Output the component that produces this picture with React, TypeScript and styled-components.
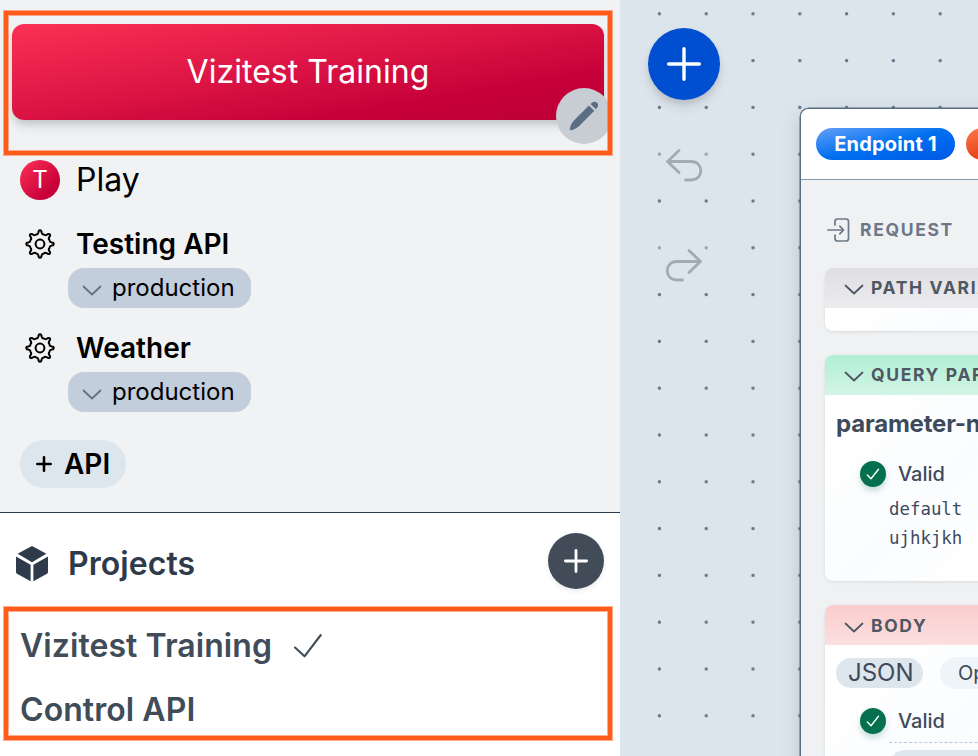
import React from 'react';
import styled, { createGlobalStyle, css } from 'styled-components';

const Global = createGlobalStyle`
  * { box-sizing: border-box; }
  body { margin: 0; overflow: hidden; font-family: Inter, "Liberation Sans", sans-serif; }
  svg { display: block; flex: none; overflow: visible; }
  button { font: inherit; border: 0; padding: 0; }
`;

const Page = styled.div`
  display: grid;
  grid-template-columns: 620px 1fr;
  width: 978px;
  height: 756px;
  overflow: hidden;
`;

/* Sidebar */
const Sidebar = styled.aside`
  display: flex;
  flex-direction: column;
  background: #f0f2f4;
`;
const Workspace = styled.section`
  height: 513px;
  padding: 24px 16px 0 12px;
  border-bottom: 1px solid #2d3b4e;
`;
const Banner = styled.header`
  position: relative;
  display: flex;
  align-items: center;
  justify-content: center;
  height: 96px;
  padding-bottom: 2px;
  border-radius: 12px;
  color: #fff;
  font-size: 32px;
  letter-spacing: 0.04px;
  background: linear-gradient(to bottom right, #fc3054, #d91243 50%, #c70039 75%, #bb0036);
  box-shadow: 0 8px 12px -2px rgba(0, 0, 0, 0.12), 0 3px 6px rgba(0, 0, 0, 0.09);
`;
const EditButton = styled.button`
  position: absolute;
  right: -8px;
  bottom: -24px;
  display: grid;
  place-items: center;
  width: 56px;
  height: 56px;
  border-radius: 50%;
  background: #c8cdd4;
  color: #5b6d83;
`;
const Frame = styled.div<{ $top: number; $height: number }>`
  position: absolute;
  left: 4px;
  top: ${p => p.$top}px;
  width: 608px;
  height: ${p => p.$height}px;
  border: 4px solid #ff5c1c;
  box-shadow: 0 0 0 1px rgba(255, 92, 28, 0.5), inset 0 0 0 1px rgba(255, 92, 28, 0.5);
  pointer-events: none;
`;
const NavRow = styled.div<{ $bold?: boolean }>`
  display: flex;
  align-items: center;
  gap: 16px;
  height: 40px;
  padding-left: 8px;
  color: #000;
  font-size: ${p => (p.$bold ? 28 : 32)}px;
  font-weight: ${p => (p.$bold ? 600 : 400)};
`;
const PlayRow = styled(NavRow)`
  margin: 40px 0 24px;
`;
const PlayLabel = styled.span`
  padding-bottom: 2px;
`;
const Avatar = styled.span`
  display: grid;
  place-items: center;
  width: 40px;
  height: 40px;
  padding-bottom: 1px;
  border-radius: 50%;
  font-size: 24px;
  color: #fff;
  background: linear-gradient(135deg, #ff3255, #c70039 75%);
`;
const IconSlot = styled.span`
  display: grid;
  place-items: center;
  width: 40px;
`;
const EnvChip = styled.button`
  display: flex;
  align-items: center;
  gap: 10px;
  width: 183px;
  height: 40px;
  margin: 4px 0 20px 56px;
  padding: 0 0 2px 14px;
  border-radius: 16px;
  background: #c3cedd;
  color: #000;
  font-size: 24px;
`;
const AddApi = styled.button`
  display: flex;
  align-items: center;
  gap: 12px;
  width: 106px;
  height: 48px;
  margin: 28px 0 0 8px;
  padding-left: 16px;
  border-radius: 24px;
  background: #dde5ed;
  color: #000;
  font-size: 28px;
  font-weight: 600;
`;
const Projects = styled.section`
  flex: 1;
  background: #fff;
  color: #414c59;
  font-size: 32px;
  font-weight: 600;
  letter-spacing: 0.06px;
`;
const ProjectsHead = styled.div`
  display: flex;
  align-items: center;
  height: 101px;
  padding: 0 16px;
  color: #2f3a4a;
`;
const ProjectsTitle = styled.span`
  margin-left: 20px;
`;
const AddProject = styled.button`
  display: grid;
  place-items: center;
  width: 56px;
  height: 56px;
  margin: -5px 0 0 auto;
  border-radius: 50%;
  background: #414c58;
  color: #fff;
  box-shadow: 0 3px 5px rgba(0, 0, 0, 0.07);
`;
const ProjectRow = styled.div`
  display: flex;
  align-items: center;
  gap: 21px;
  height: 64px;
  padding: 0 0 2px 20px;
`;

/* Canvas */
const Canvas = styled.main`
  display: flex;
  overflow: hidden;
  background-color: #dde5ec;
  background-image: radial-gradient(circle at 23.4px 23.4px, #61738a 1.2px, rgba(97, 115, 138, 0) 2.1px);
  background-size: 46.8px 46.8px;
  background-position: 16px -9.6px;
`;
const Tools = styled.div`
  display: flex;
  flex-direction: column;
  gap: 28px;
  width: 180px;
  padding: 28px;
  flex: none;
`;
const ToolButton = styled.button<{ $primary?: boolean }>`
  display: grid;
  place-items: center;
  width: 72px;
  height: 72px;
  border-radius: 50%;
  ${p =>
    p.$primary
      ? css`
          background: #004fd1;
          color: #fff;
          box-shadow: 0 8px 12px -2px rgba(0, 0, 0, 0.12), 0 3px 6px rgba(0, 0, 0, 0.08);
        `
      : css`
          padding-top: 2px;
          background: rgba(221, 229, 236, 0.4);
          color: #a2aab6;
        `}
`;
const NodeCard = styled.article`
  flex: none;
  width: 420px;
  height: 720px;
  margin-top: 108px;
  border: 1px solid #5a6d85;
  border-radius: 9px 0 0 0;
  background: #f0f1f3;
  box-shadow: 0 0 0 0.5px #5a6d85, 0 6px 20px rgba(50, 70, 95, 0.2);
  overflow: hidden;
`;
const Tabs = styled.div`
  display: flex;
  align-items: center;
  gap: 11px;
  height: 71px;
  padding-left: 15px;
  background: #fff;
  border-bottom: 1px solid #8796aa;
`;
const Tab = styled.span<{ $hot?: boolean }>`
  flex: none;
  width: 139px;
  height: 32px;
  border-radius: 16px;
  line-height: 32px;
  text-align: center;
  font-size: 20px;
  font-weight: 700;
  letter-spacing: 0.2px;
  color: #fff;
  background: ${p =>
    p.$hot
      ? 'linear-gradient(160deg, #ff7a4d, #e84a20 35%)'
      : 'linear-gradient(to bottom right, #64a0f8, #0070f0 50%, #0058e6)'};
`;
const NodeBody = styled.div`
  display: flex;
  flex-direction: column;
  gap: 24px;
  padding: 36px 0 0 24px;
`;
const Caps = styled.div`
  display: flex;
  align-items: center;
  height: 28px;
  font-size: 17.5px;
  font-weight: 700;
  letter-spacing: 1.65px;
  white-space: nowrap;
`;
const RequestTitle = styled(Caps)`
  gap: 10px;
  padding-left: 2px;
  color: #6c7887;
`;
const RequestLabel = styled.span`
  padding-bottom: 2px;
`;
const Panel = styled.section<{ $height: number }>`
  flex: none;
  height: ${p => p.$height}px;
  border-radius: 8px;
  overflow: hidden;
  background: linear-gradient(135deg, #fff 14%, #fafcfe 40%, #fff 60%);
  box-shadow: 0 1px 3px rgba(0, 0, 0, 0.1);
  color: #3e4a5b;
`;
const tones = {
  grey: 'linear-gradient(#dfdfe1, #ececee)',
  green: 'linear-gradient(#b0efd5, #d2f4e6)',
  red: 'linear-gradient(#fbcccc, #fcdfe0)',
};
const PanelHead = styled(Caps)<{ $tone: keyof typeof tones }>`
  gap: 8px;
  height: 39.5px;
  padding-left: 20px;
  color: #4f5763;
  background: ${p => tones[p.$tone]};
`;
const ParamName = styled.h3`
  margin: 14px 0 21px 11px;
  font-size: 24px;
  line-height: 30px;
  font-weight: 700;
  letter-spacing: -0.2px;
  white-space: nowrap;
`;
const ValidRow = styled.div`
  display: flex;
  align-items: center;
  gap: 12px;
  height: 28px;
  margin-left: 35px;
  font-size: 20px;
  font-weight: 500;
`;
const Tick = styled.span`
  display: grid;
  place-items: center;
  width: 26px;
  height: 26px;
  border-radius: 50%;
  background: #04704d;
  color: #fff;
  box-shadow: 0 4px 6px rgba(0, 112, 77, 0.22);
`;
const Values = styled.div`
  margin: 7px 0 0 64px;
  font: 17.4px/29px "DejaVu Sans Mono", monospace;
`;
const Formats = styled.div`
  display: flex;
  align-items: center;
  gap: 17px;
  height: 32px;
  margin: 12px 0 18px 11px;
`;
const Format = styled.span<{ $active?: boolean }>`
  flex: none;
  width: ${p => (p.$active ? 87 : 120)}px;
  height: ${p => (p.$active ? 30 : 32)}px;
  padding-left: ${p => (p.$active ? 12 : 18)}px;
  line-height: ${p => (p.$active ? 30 : 32)}px;
  border-radius: 16px;
  font-size: ${p => (p.$active ? 24 : 20)}px;
  background: ${p => (p.$active ? '#dde5ed' : '#eff4f8')};
`;
const Field = styled.div`
  margin: 7px 0 0 64px;
  padding-top: 7px;
  border-top: 1px dashed #b8c9dd;
`;
const FieldBox = styled.div`
  height: 40px;
  border-radius: 16px;
  background: #dde5ed;
`;

const Line = ({ w, h, d, s }: { w: number; h: number; d: string; s: number }) => (
  <svg width={w} height={h} viewBox={`0 0 ${w} ${h}`} fill="none" stroke="currentColor" strokeWidth={s} strokeLinecap="round" strokeLinejoin="round">
    <path d={d} />
  </svg>
);
const Plus = ({ size, s }: { size: number; s: number }) => (
  <Line w={size} h={size} s={s} d={`M${size / 2} ${s / 2}V${size - s / 2}M${s / 2} ${size / 2}H${size - s / 2}`} />
);
const Pencil = () => (
  <svg width="30" height="30" viewBox="0 0 30 30" fill="currentColor">
    <path d="M19.9 4.4 25.3 9.8 10.2 24.9C7.7 27.1 4.6 28.8 2.2 29.2 1.1 29.4.6 28.9.8 27.8 1.3 25.3 2.8 22 4.9 19.6Z" />
    <path d="M21.5 3 23.2 1.6C24.9.4 26.8.6 28.2 1.9 29.4 3.2 29.5 5.1 28.2 6.6L26.8 8.3Z" />
  </svg>
);
const gearPath = (() => {
  const at = (r: number, deg: number) => {
    const a = (deg * Math.PI) / 180;
    return `${(15 + r * Math.sin(a)).toFixed(2)} ${(15 - r * Math.cos(a)).toFixed(2)}`;
  };
  return (
    [0, 45, 90, 135, 180, 225, 270, 315]
      .map(b => `${b ? 'L' : 'M'}${at(13, b - 6)}Q${at(14.6, b)} ${at(13, b + 6)}L${at(11.6, b + 8)}Q${at(9.6, b + 13)} ${at(10.3, b + 22.5)}Q${at(9.6, b + 32)} ${at(11.6, b + 37)}`)
      .join('') + 'Z'
  );
})();
const Gear = () => (
  <svg width="30" height="30" viewBox="0 0 30 30" fill="none" stroke="#000" strokeWidth="2" strokeLinejoin="round">
    <path d={gearPath} />
    <circle cx="15" cy="15" r="4.4" />
  </svg>
);
const ChevronIcon = styled.svg<{ $muted?: boolean }>`
  width: ${p => (p.$muted ? 20 : 18)}px;
  height: 12px;
  margin-top: ${p => (p.$muted ? 5 : 3)}px;
  fill: none;
  stroke: ${p => (p.$muted ? '#68727f' : '#4d5866')};
  stroke-width: 1.8;
  stroke-linecap: round;
  stroke-linejoin: round;
`;
const Chevron = ({ muted }: { muted?: boolean }) => (
  <ChevronIcon $muted={muted} viewBox={muted ? '0 0 20 12' : '1 0 18 12'}>
    <path d="M1.5 2.5 10 10.5 18.5 2.5" />
  </ChevronIcon>
);
const Cube = () => (
  <svg width="32" height="36" viewBox="0 0 32 36" fill="currentColor">
    <path d="M15 .4Q16 0 17 .4L30.4 7.8 16 16.3 1.6 7.8Z" />
    <path d="M0 10.4 14.6 18.8V35.2L1 27.7Q0 27 0 26Z" />
    <path d="M32 10.4 17.4 18.8V35.2L31 27.7Q32 27 32 26Z" />
  </svg>
);
const Enter = () => (
  <Line w={23} h={26} s={1.7} d="M8 8V4.5Q8 2 10.5 2H19Q21.5 2 21.5 4.5V21.5Q21.5 24 19 24H10.5Q8 24 8 21.5V18M1 13H16.5M12.8 9.2 16.6 13 12.8 16.8" />
);
const Valid = () => (
  <ValidRow>
    <Tick><Line w={14} h={12} s={1.4} d="M1.3 7 5 10.8 12.5 1.3" /></Tick>
    Valid
  </ValidRow>
);
const Api = ({ name }: { name: string }) => (
  <>
    <NavRow $bold><IconSlot><Gear /></IconSlot>{name}</NavRow>
    <EnvChip><Chevron muted />production</EnvChip>
  </>
);

export default function App() {
  return (
    <Page>
      <Global />
      <Sidebar>
        <Workspace>
          <Banner>
            Vizitest Training
            <EditButton aria-label="Edit"><Pencil /></EditButton>
          </Banner>
          <PlayRow><Avatar>T</Avatar><PlayLabel>Play</PlayLabel></PlayRow>
          <Api name="Testing API" />
          <Api name="Weather" />
          <AddApi><Plus size={16} s={2.6} />API</AddApi>
        </Workspace>
        <Projects>
          <ProjectsHead>
            <Cube />
            <ProjectsTitle>Projects</ProjectsTitle>
            <AddProject aria-label="Add project"><Plus size={24} s={2.8} /></AddProject>
          </ProjectsHead>
          <ProjectRow>
            Vizitest Training
            <Line w={30} h={26} s={2.1} d="M2 15.5 11.5 24.3 27.8 3" />
          </ProjectRow>
          <ProjectRow>Control API</ProjectRow>
        </Projects>
      </Sidebar>
      <Canvas>
        <Tools>
          <ToolButton $primary aria-label="Add"><Plus size={34} s={3.4} /></ToolButton>
          <ToolButton aria-label="Undo"><Line w={36} h={34} s={2.8} d="M13 2.5 1.5 13.5 13 24.5M1.5 13.5H25C38 13.5 38 32 25 32H19.5" /></ToolButton>
          <ToolButton aria-label="Redo"><Line w={36} h={34} s={2.8} d="M23 2.5 34.5 13.5 23 24.5M34.5 13.5H11C-2 13.5-2 32 11 32H16.5" /></ToolButton>
        </Tools>
        <NodeCard>
          <Tabs>
            <Tab>Endpoint 1</Tab>
            <Tab $hot />
          </Tabs>
          <NodeBody>
            <RequestTitle><Enter /><RequestLabel>REQUEST</RequestLabel></RequestTitle>
            <Panel $height={63}>
              <PanelHead $tone="grey"><Chevron />PATH VARIABLES</PanelHead>
            </Panel>
            <Panel $height={226.4}>
              <PanelHead $tone="green"><Chevron />QUERY PARAMETERS</PanelHead>
              <ParamName>parameter-name</ParamName>
              <Valid />
              <Values>default<br />ujhkjkh</Values>
            </Panel>
            <Panel $height={240}>
              <PanelHead $tone="red"><Chevron />BODY</PanelHead>
              <Formats>
                <Format $active>JSON</Format>
                <Format>Options</Format>
              </Formats>
              <Valid />
              <Field><FieldBox /></Field>
            </Panel>
          </NodeBody>
        </NodeCard>
      </Canvas>
      <Frame $top={11} $height={144} />
      <Frame $top={607} $height={133} />
    </Page>
  );
}
